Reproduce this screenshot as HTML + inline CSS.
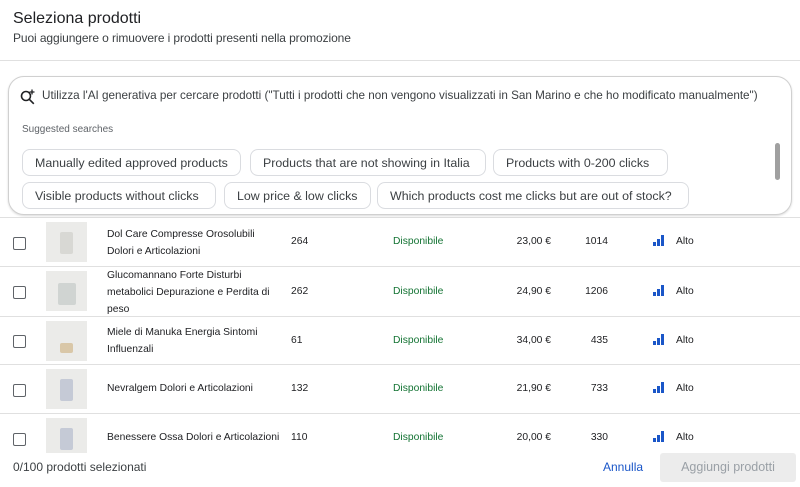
<!DOCTYPE html><html><head><meta charset="utf-8"><style>
body{margin:0;width:800px;height:487px;background:#fff;font-family:"Liberation Sans",sans-serif;color:#202124;position:relative;overflow:hidden}
.a{position:absolute;white-space:nowrap}
.chip{position:absolute;height:27px;border:1px solid #dadce0;border-radius:8px;font-size:12.4px;line-height:26px;padding:0 12px;color:#3c4043;background:#fff;box-sizing:border-box}
.row{position:absolute;left:0;width:800px;border-top:1px solid #e0e0e0;font-size:10.3px;color:#202124}
.cb{position:absolute;left:13px;width:11px;height:11px;border:1.5px solid #5f6368;border-radius:2px}
.th{position:absolute;left:46px;width:41px;height:40px;background:#ebebe9}
.th b{position:absolute;left:14px;top:10px;width:13px;height:22px;background:#d8d8d4;border-radius:2px}
.bars{position:absolute;left:653px}
.bars i{position:absolute;width:3px;background:#1a56c8}
</style></head><body>
<div class="a" style="left:13px;top:10px;font-size:16px">Seleziona prodotti</div>
<div class="a" style="left:13px;top:31px;font-size:12px;color:#3c4043;letter-spacing:-0.1px">Puoi aggiungere o rimuovere i prodotti presenti nella promozione</div>
<div class="a" style="left:0;top:60px;width:800px;height:1px;background:#e0e0e0"></div>

<div class="row" style="top:217px;height:48px"><div class="cb" style="top:19px"></div><div class="th" style="top:4px"><b></b></div><div class="a" style="left:107px;top:8px;line-height:17px;white-space:normal;width:175px">Dol Care Compresse Orosolubili Dolori e Articolazioni</div><div class="a" style="left:291px;top:18px">264</div><div class="a" style="left:393px;top:18px;color:#137333">Disponibile</div><div class="a" style="left:500px;width:51px;text-align:right;top:18px">23,00 €</div><div class="a" style="left:560px;width:48px;text-align:right;top:18px">1014</div><div class="bars" style="top:17px"><i style="left:0;height:4px;top:7px"></i><i style="left:4px;height:7px;top:4px"></i><i style="left:8px;height:11px;top:0"></i></div><div class="a" style="left:676px;top:18px">Alto</div></div>

<div class="row" style="top:266px;height:49px"><div class="cb" style="top:19px"></div><div class="th" style="top:4px"><b style="width:18px;left:12px;top:12px;background:#d0d4d2"></b></div><div class="a" style="left:107px;top:0px;line-height:17px;white-space:normal;width:175px">Glucomannano Forte Disturbi metabolici Depurazione e Perdita di peso</div><div class="a" style="left:291px;top:19px">262</div><div class="a" style="left:393px;top:19px;color:#137333">Disponibile</div><div class="a" style="left:500px;width:51px;text-align:right;top:19px">24,90 €</div><div class="a" style="left:560px;width:48px;text-align:right;top:19px">1206</div><div class="bars" style="top:18px"><i style="left:0;height:4px;top:7px"></i><i style="left:4px;height:7px;top:4px"></i><i style="left:8px;height:11px;top:0"></i></div><div class="a" style="left:676px;top:19px">Alto</div></div>

<div class="row" style="top:316px;height:47px"><div class="cb" style="top:18px"></div><div class="th" style="top:4px"><b style="background:#d9c7a8;top:22px;height:10px"></b></div><div class="a" style="left:107px;top:7px;line-height:17px;white-space:normal;width:175px">Miele di Manuka Energia Sintomi Influenzali</div><div class="a" style="left:291px;top:18px">61</div><div class="a" style="left:393px;top:18px;color:#137333">Disponibile</div><div class="a" style="left:500px;width:51px;text-align:right;top:18px">34,00 €</div><div class="a" style="left:560px;width:48px;text-align:right;top:18px">435</div><div class="bars" style="top:17px"><i style="left:0;height:4px;top:7px"></i><i style="left:4px;height:7px;top:4px"></i><i style="left:8px;height:11px;top:0"></i></div><div class="a" style="left:676px;top:18px">Alto</div></div>

<div class="row" style="top:364px;height:48px"><div class="cb" style="top:19px"></div><div class="th" style="top:4px"><b style="background:#c5cad6"></b></div><div class="a" style="left:107px;top:18px">Nevralgem Dolori e Articolazioni</div><div class="a" style="left:291px;top:18px">132</div><div class="a" style="left:393px;top:18px;color:#137333">Disponibile</div><div class="a" style="left:500px;width:51px;text-align:right;top:18px">21,90 €</div><div class="a" style="left:560px;width:48px;text-align:right;top:18px">733</div><div class="bars" style="top:17px"><i style="left:0;height:4px;top:7px"></i><i style="left:4px;height:7px;top:4px"></i><i style="left:8px;height:11px;top:0"></i></div><div class="a" style="left:676px;top:18px">Alto</div></div>

<div class="row" style="top:413px;height:40px"><div class="cb" style="top:19px"></div><div class="th" style="top:4px;height:36px"><b style="background:#c5cad6"></b></div><div class="a" style="left:107px;top:18px">Benessere Ossa Dolori e Articolazioni</div><div class="a" style="left:291px;top:18px">110</div><div class="a" style="left:393px;top:18px;color:#137333">Disponibile</div><div class="a" style="left:500px;width:51px;text-align:right;top:18px">20,00 €</div><div class="a" style="left:560px;width:48px;text-align:right;top:18px">330</div><div class="bars" style="top:17px"><i style="left:0;height:4px;top:7px"></i><i style="left:4px;height:7px;top:4px"></i><i style="left:8px;height:11px;top:0"></i></div><div class="a" style="left:676px;top:18px">Alto</div></div>

<div class="a" style="left:0;top:453px;width:800px;height:34px;background:#fff"></div>
<div class="a" style="left:13px;top:460px;font-size:12px;color:#3c4043">0/100 prodotti selezionati</div>
<div class="a" style="left:603px;top:460px;font-size:12px;color:#1a56c8">Annulla</div>
<div class="a" style="left:660px;top:453px;width:136px;height:29px;background:#ececec;border-radius:3px;color:#9aa0a6;font-size:12.5px;text-align:center;line-height:29px">Aggiungi prodotti</div>

<div class="a" style="left:8px;top:76px;width:784px;height:139px;box-sizing:border-box;border:1px solid #d0d0d0;border-radius:16px;background:#fff;box-shadow:0 1px 2px rgba(0,0,0,.15)">
<svg class="a" style="left:10px;top:11px" width="18" height="18" viewBox="0 0 18 18" fill="none" stroke="#202124" stroke-width="1.6"><circle cx="7" cy="8" r="4.5"/><path d="M10.3 11.3l4.5 4.5"/><path d="M13 1.5v5M10.5 4h5" stroke-width="1.3"/></svg>
<div class="a" style="left:33px;top:12px;font-size:11.7px;color:#3c4043">Utilizza l'AI generativa per cercare prodotti ("Tutti i prodotti che non vengono visualizzati in San Marino e che ho modificato manualmente")</div>
<div class="a" style="left:13px;top:47px;font-size:10px;color:#5f6368">Suggested searches</div>
<div class="chip" style="left:13px;top:72px;width:219px">Manually edited approved products</div>
<div class="chip" style="left:241px;top:72px;width:236px">Products that are not showing in Italia</div>
<div class="chip" style="left:484px;top:72px;width:175px">Products with 0-200 clicks</div>
<div class="chip" style="left:13px;top:105px;width:194px">Visible products without clicks</div>
<div class="chip" style="left:215px;top:105px;width:147px">Low price &amp; low clicks</div>
<div class="chip" style="left:368px;top:105px;width:312px">Which products cost me clicks but are out of stock?</div>
<div class="a" style="left:766px;top:66px;width:5px;height:37px;background:#a0a0a0;border-radius:3px"></div>
</div>
</body></html>
